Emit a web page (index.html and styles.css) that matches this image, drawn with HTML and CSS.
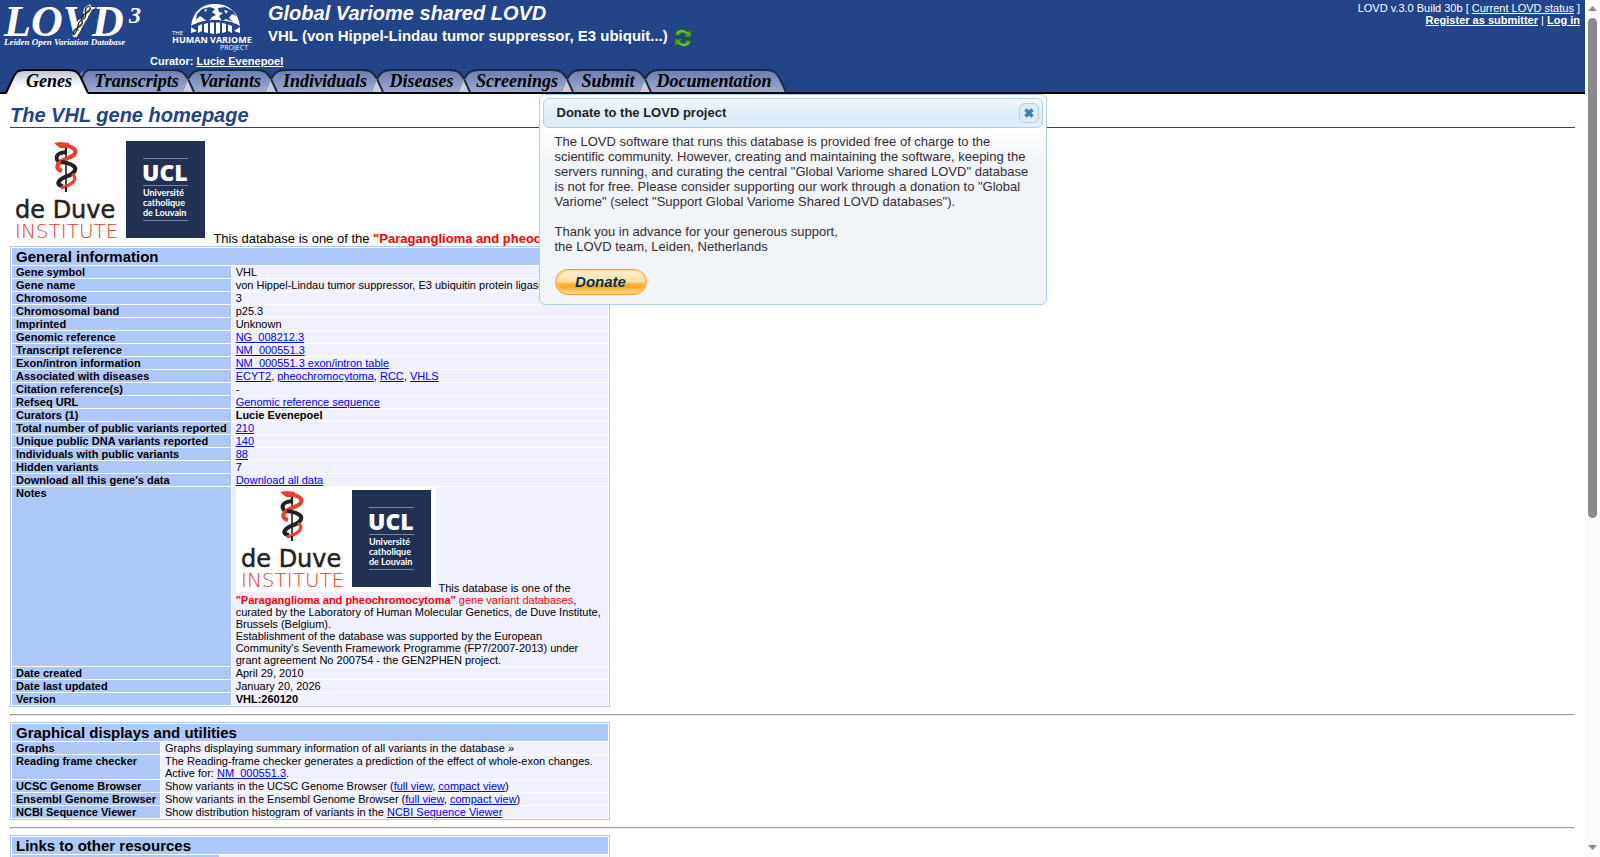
FILE: index.html
```html
<!DOCTYPE html>
<html lang="en">
<head>
<meta charset="utf-8">
<title>The VHL gene homepage - Global Variome shared LOVD</title>
<link rel="stylesheet" href="styles.css">
</head>
<body>
<svg class="defs" aria-hidden="true">
  <defs>
    <symbol id="institutes" viewBox="0 0 200 105">
      <rect width="200" height="105" fill="#fff"/>
      <g fill="none">
        <path d="M56 5V50" stroke="#222" stroke-width="1.600"/>
        <path d="M56 14C46 15 44 20 50 25" stroke="#222" stroke-width="4"/>
        <path d="M53 7C68 9 69 16 58 20C45 25 45 31 52 33" stroke="#e8402f" stroke-width="4.200"/>
        <path d="M51 24C67 26 69 32 60 37C46 42 46 47 53 48" stroke="#222" stroke-width="4.200"/>
        <path d="M62 36C68 40 65 46 51 50" stroke="#e8402f" stroke-width="3.200"/>
        <path d="M56 5V17M56 49V54" stroke="#222" stroke-width="2.200"/>
      </g>
      <path d="M44 5L50 4L59 5L58 10L50 10Z" fill="#e8402f"/>
      <text x="5" y="80" class="duve">de Duve</text>
      <text x="5" y="100" class="inst">INSTITUTE</text>
      <rect x="116" y="3" width="79" height="97" fill="#223153"/>
      <path d="M133 20.500H178M133 47.500H178M133 82.500H178" stroke="#7783a0" stroke-width="1"/>
      <text x="132" y="43" class="ucl">UCL</text>
      <text x="133" y="58" class="ucl-sub">Université</text>
      <text x="133" y="68" class="ucl-sub">catholique</text>
      <text x="133" y="78" class="ucl-sub">de Louvain</text>
    </symbol>
  </defs>
</svg>

<div class="page">
  <header class="masthead">
    <div class="top">
      <a class="logo" href="#" aria-label="LOVD">
        <svg width="150" height="50" viewBox="0 0 150 50">
          <text x="4" y="36" class="lovd">LOVD</text>
          <text x="129" y="23" class="three">3</text>
          <path d="M91 6C78 12 93 16 81 21C74 25 85 27 73 36" stroke="#fff" stroke-width="4" fill="none"/>
          <path d="M90 6C80 9 91 15 82 20C74 24 82 28 73 35M90 7C93 13 78 14 82 21C85 27 72 27 73 35" fill="none" stroke="#222" stroke-width="1.300"/>
          <path d="M84 11L90 11M82 17L86 17M78 25L82 25M75 30L79 30" stroke="#555" stroke-width="1"/>
          <text x="4" y="45" class="tagline">Leiden Open Variation Database</text>
        </svg>
      </a>
      <a class="hvp" href="#" aria-label="The Human Variome Project">
        <svg width="118" height="52" viewBox="0 0 118 52">
          <path d="M41 26C43 11 52 4 65 4S88 11 90 26C84 22 74 20 65 20S47 22 41 26Z" fill="#fff"/>
          <path d="M47 14L52 9L60 7L65 9L62 12L66 15L62 17L58 22L53 18L50 16L46 20ZM68 8L75 7L83 11L86 16L82 14L79 18L83 22L76 19L72 21L69 16L73 13L69 12Z" fill="#224488"/>
          <path d="M54 10L57 9L56 12ZM74 10L78 11L76 14Z" fill="#fff"/>
          <path d="M41 27L47 31L41 33ZM90 27L84 31L90 33Z" fill="#fff"/>
          <path d="M48 26L52 24V31L48 33ZM54 24L58 23V33L54 32ZM60 22.500H64V34L60 33ZM66 22.500H70V33L66 34ZM72 23L76 24V32L72 33ZM78 24.500L82 26V33L78 31Z" fill="#fff"/>
          <text x="22" y="35" class="hvp-the">THE</text>
          <text x="22" y="43" class="hvp-name">HUMAN VARIOME</text>
          <text x="70" y="50" class="hvp-project">PROJECT</text>
        </svg>
      </a>
      <div class="titles">
        <h1>Global Variome shared LOVD</h1>
        <div class="gene">VHL (von Hippel-Lindau tumor suppressor, E3 ubiquit...)
          <button class="switch" type="button" aria-label="Switch gene">
            <svg width="18" height="18" viewBox="0 0 18 18">
              <g stroke="#1f6b12" stroke-width="1" fill="#4fa824">
                <path d="M1 6C2 0 10 -1 14 3L17 1V8H10L12 5.500C9 3 6 4 5 7Z"/>
                <path d="M17 12C16 18 8 19 4 15L1 17V10H8L6 12.500C9 15 12 14 13 11Z"/>
              </g>
              <path d="M3 4C6 1 10 1 13 4M15 14C12 17 8 17 5 14" fill="none" stroke="#8fdc5c"/>
            </svg>
          </button>
        </div>
      </div>
      <div class="status">
        <div>LOVD v.3.0 Build 30b [ <a href="#">Current LOVD status</a> ]</div>
        <div class="account"><a href="#"><b>Register as submitter</b></a> | <a href="#"><b>Log in</b></a></div>
      </div>
    </div>
    <div class="curator">Curator: <a href="#">Lucie Evenepoel</a></div>
    <nav class="tabs" aria-label="Main">
      <svg class="tab-shapes" width="800" height="25" viewBox="0 0 800 25" aria-hidden="true">
        <defs>
          <linearGradient id="tabfill" x1="0" y1="0" x2="0" y2="1"><stop offset="0" stop-color="#687db3"/><stop offset="1" stop-color="#9dabcd"/></linearGradient>
          <linearGradient id="activefill" x1="0" y1="0" x2="0" y2="1"><stop offset="0" stop-color="#b9c2de"/><stop offset=".7" stop-color="#fff"/></linearGradient>
          <g id="join">
            <path d="M-9 0H9L0 9Z" fill="#224488"/>
            <path d="M0 9L-7 23H7Z" fill="#c6cde0"/>
            <path d="M-15 1C-7 1 -4 3 0 10L6 23" fill="none" stroke="#20283f" stroke-width="2"/>
            <path d="M15 1C7 1 4 3 0 10" fill="none" stroke="#20283f" stroke-width="2"/>
            <path d="M0 10L-6 23" fill="none" stroke="#7f8598" stroke-width="1"/>
          </g>
        </defs>
        <path d="M75 23V11C79 4 83 1 89 1H765C774 1 777 4 780 10L786 23Z" fill="url(#tabfill)"/>
        <path d="M82 9C84 4 85 1 90 1H765C774 1 777 4 780 10L786 23" fill="none" stroke="#1b2a52" stroke-width="2"/>
        <use href="#join" x="188"/>
        <use href="#join" x="271"/>
        <use href="#join" x="377"/>
        <use href="#join" x="464"/>
        <use href="#join" x="567"/>
        <use href="#join" x="645"/>
        <path d="M6 25L13 9C16 3 18 1 24 1H69C75 1 78 3 81 9L88 25Z" fill="url(#activefill)"/>
        <path d="M6 24L13 9C16 3 18 1 24 1H69C75 1 78 3 81 9L88 24" fill="none" stroke="#000" stroke-width="2"/>
      </svg>
      <a class="tab w-genes" href="#">Genes</a>
      <a class="tab w-transcripts" href="#">Transcripts</a>
      <a class="tab w-variants" href="#">Variants</a>
      <a class="tab w-individuals" href="#">Individuals</a>
      <a class="tab w-diseases" href="#">Diseases</a>
      <a class="tab w-screenings" href="#">Screenings</a>
      <a class="tab w-submit" href="#">Submit</a>
      <a class="tab w-docs" href="#">Documentation</a>
    </nav>
  </header>

  <main class="content">
    <h2>The VHL gene homepage</h2>
    <p class="intro"><svg class="institutes" width="200" height="105" role="img" aria-label="de Duve Institute, UCL"><use href="#institutes"/></svg> This database is one of the <span class="red"><b>"Paraganglioma and pheochromocytoma"</b> gene variant databases</span></p>

    <table class="info">
      <thead><tr><th class="head" colspan="2">General information</th></tr></thead>
      <tbody>
        <tr><th>Gene symbol</th><td>VHL</td></tr>
        <tr><th>Gene name</th><td>von Hippel-Lindau tumor suppressor, E3 ubiquitin protein ligase</td></tr>
        <tr><th>Chromosome</th><td>3</td></tr>
        <tr><th>Chromosomal band</th><td>p25.3</td></tr>
        <tr><th>Imprinted</th><td>Unknown</td></tr>
        <tr><th>Genomic reference</th><td><a href="#">NG_008212.3</a></td></tr>
        <tr><th>Transcript reference</th><td><a href="#">NM_000551.3</a></td></tr>
        <tr><th>Exon/intron information</th><td><a href="#">NM_000551.3 exon/intron table</a></td></tr>
        <tr><th>Associated with diseases</th><td><a href="#">ECYT2</a>, <a href="#">pheochromocytoma</a>, <a href="#">RCC</a>, <a href="#">VHLS</a></td></tr>
        <tr><th>Citation reference(s)</th><td>-</td></tr>
        <tr><th>Refseq URL</th><td><a href="#">Genomic reference sequence</a></td></tr>
        <tr><th>Curators (1)</th><td><b>Lucie Evenepoel</b></td></tr>
        <tr><th>Total number of public variants reported</th><td><a href="#">210</a></td></tr>
        <tr><th>Unique public DNA variants reported</th><td><a href="#">140</a></td></tr>
        <tr><th>Individuals with public variants</th><td><a href="#">88</a></td></tr>
        <tr><th>Hidden variants</th><td>7</td></tr>
        <tr><th>Download all this gene's data</th><td><a href="#">Download all data</a></td></tr>
        <tr><th>Notes</th><td><svg class="institutes" width="200" height="105" role="img" aria-label="de Duve Institute, UCL"><use href="#institutes"/></svg> This database is one of the <span class="red"><b>"Paraganglioma and pheochromocytoma"</b> gene variant databases</span>, curated by the Laboratory of Human Molecular Genetics, de Duve Institute, Brussels (Belgium).<br>Establishment of the database was supported by the European Community's Seventh Framework Programme (FP7/2007-2013) under grant agreement No 200754 - the GEN2PHEN project.</td></tr>
        <tr><th>Date created</th><td>April 29, 2010</td></tr>
        <tr><th>Date last updated</th><td>January 20, 2026</td></tr>
        <tr><th>Version</th><td><b>VHL:260120</b></td></tr>
      </tbody>
    </table>
    <hr>
    <table class="info">
      <thead><tr><th class="head" colspan="2">Graphical displays and utilities</th></tr></thead>
      <tbody>
        <tr><th>Graphs</th><td>Graphs displaying summary information of all variants in the database »</td></tr>
        <tr><th>Reading frame checker</th><td>The Reading-frame checker generates a prediction of the effect of whole-exon changes.<br>Active for: <a href="#">NM_000551.3</a>.</td></tr>
        <tr><th>UCSC Genome Browser</th><td>Show variants in the UCSC Genome Browser (<a href="#">full view</a>, <a href="#">compact view</a>)</td></tr>
        <tr><th>Ensembl Genome Browser</th><td>Show variants in the Ensembl Genome Browser (<a href="#">full view</a>, <a href="#">compact view</a>)</td></tr>
        <tr><th>NCBI Sequence Viewer</th><td>Show distribution histogram of variants in the <a href="#">NCBI Sequence Viewer</a></td></tr>
      </tbody>
    </table>
    <hr>
    <table class="info links">
      <colgroup><col class="label-col"><col></colgroup>
      <thead><tr><th class="head" colspan="2">Links to other resources</th></tr></thead>
      <tbody><tr><th></th><td></td></tr></tbody>
    </table>
  </main>

  <div class="dialog" role="dialog" aria-labelledby="dialog-title">
    <div class="dialog-bar">
      <span id="dialog-title">Donate to the LOVD project</span>
      <button class="close" type="button" aria-label="Close">
        <svg width="10" height="10" viewBox="0 0 10 10"><path d="M1.500 1.500L8.500 8.500M8.500 1.500L1.500 8.500" stroke="#3d80b3" stroke-width="3.600"/></svg>
      </button>
    </div>
    <div class="dialog-body">
      <p>The LOVD software that runs this database is provided free of charge to the scientific community. However, creating and maintaining the software, keeping the servers running, and curating the central "Global Variome shared LOVD" database is not for free. Please consider supporting our work through a donation to "Global Variome" (select "Support Global Variome Shared LOVD databases").</p>
      <p>Thank you in advance for your generous support,<br>the LOVD team, Leiden, Netherlands</p>
      <button class="donate" type="button">Donate</button>
    </div>
  </div>
</div>

<div class="scrollbar" aria-hidden="true">
  <svg width="9" height="5" viewBox="0 0 9 5"><path d="M0 5L4.500 0L9 5Z" fill="#8b8b8b"/></svg>
  <div class="track"><div class="thumb"></div></div>
  <svg width="9" height="5" viewBox="0 0 9 5"><path d="M0 0L4.500 5L9 0Z" fill="#8b8b8b"/></svg>
</div>
</body>
</html>
```
FILE: styles.css
```css
* { box-sizing: border-box; }

body {
  margin: 0;
  height: 100vh;
  overflow: hidden;
  display: grid;
  grid-template-columns: 1fr 15px;
  background: #fff;
  color: #000;
  font: 13px/15px "Liberation Sans", Arial, sans-serif;
}

.defs { position: absolute; width: 0; height: 0; }

.page {
  position: relative;
  height: 100vh;
  overflow: hidden;
}

/* Header */
.masthead {
  background: #224488;
  color: #fff;
  border-bottom: 2px solid #000;
}
.masthead a { color: #fff; }
.top {
  display: flex;
  height: 55px;
}
.logo, .hvp { display: block; }
.logo { width: 150px; }
.hvp { width: 118px; }
.logo svg, .hvp svg { display: block; overflow: visible; }
.titles { flex: 1; padding-top: 1px; }
h1 {
  margin: 0;
  font: italic bold 20px/24px "Liberation Sans", Arial, sans-serif;
}
.gene {
  display: flex;
  align-items: center;
  gap: 6px;
  font: bold 15px/22px "Liberation Sans", Arial, sans-serif;
}
.switch {
  padding: 4px 0 0;
  border: 0;
  background: none;
  height: 22px;
}
.switch svg { display: block; }
.status {
  padding: 2px 5px 0 0;
  font-size: 11px;
  line-height: 12px;
  text-align: right;
}
.curator {
  padding: 0 0 2px 150px;
  font-size: 11px;
  font-weight: bold;
  line-height: 12px;
}

.lovd, .three, .tagline {
  font-family: "Liberation Serif", "Times New Roman", serif;
  font-style: italic;
  font-weight: bold;
  fill: #fff;
}
.lovd { font-size: 44px; }
.three { font-size: 24px; }
.tagline { font-size: 9px; }
.hvp-the, .hvp-name, .hvp-project { font-family: "Open Sans", sans-serif; fill: #fff; }
.hvp-the { font-size: 6px; }
.hvp-name { font-size: 9px; font-weight: bold; }
.hvp-project { font-size: 7px; }

/* Tabs */
.tabs {
  position: relative;
  display: flex;
  height: 23px;
  padding-left: 8px;
}
.tab-shapes { position: absolute; left: 0; top: 0; }
.tabs .tab {
  position: relative;
  color: #000;
  text-align: center;
  text-decoration: none;
  font: italic bold 18px/24px "Liberation Serif", "Times New Roman", serif;
}
.w-genes { width: 82px; }
.w-transcripts { width: 93px; }
.w-variants { width: 94px; }
.w-individuals { width: 96px; }
.w-diseases { width: 97px; }
.w-screenings { width: 94px; }
.w-submit { width: 88px; }
.w-docs { width: 124px; }

/* Content */
.content { padding: 10px 10px 0; }
h2 {
  margin: 0 0 10px;
  border-bottom: 1px solid #224488;
  color: #224488;
  font: italic bold 20px/23px "Liberation Sans", Arial, sans-serif;
}
.intro { margin: 0; }
.institutes { vertical-align: baseline; }
.red { color: #f00; }

.duve { font: 24px "DejaVu Sans", sans-serif; fill: #222; stroke: #222; stroke-width: 0.5px; }
.inst { font: 200 20px "DejaVu Sans", sans-serif; fill: #e8402f; }
.ucl { font: 800 23px "Open Sans", sans-serif; fill: #fff; }
.ucl-sub { font: bold 9px Lato, sans-serif; fill: #fff; }

.info {
  width: 600px;
  border: 1px solid #afc8fa;
  border-spacing: 1px;
  font-size: 11px;
  line-height: 12px;
}
.info th, .info td {
  padding: 0 4px;
  text-align: left;
  vertical-align: top;
}
.info th {
  width: 1%;
  background: #afc8fa;
  white-space: nowrap;
}
.info td { background: #f0f0ff; }
.info .head { width: auto; font-size: 15px; line-height: 17px; }
.info a { color: #00f; }
.links { table-layout: fixed; }
.links .label-col { width: 207px; }
.links tbody th { width: auto; height: 12px; }

hr {
  margin: 7px 0 6px;
  border: 1px solid;
  border-color: #9a9a9a #eee #eee #9a9a9a;
}

/* Dialog */
.dialog {
  position: absolute;
  top: 94px;
  left: 50%;
  transform: translateX(-50%);
  width: 508px;
  padding: 3px;
  border: 1px solid #aed0ea;
  border-radius: 6px;
  background: #f2f5f7 linear-gradient(#fff, #fff 35px, #f2f5f7 65px);
  color: #362b36;
}
.dialog-bar {
  display: flex;
  align-items: center;
  justify-content: space-between;
  height: 30px;
  padding: 0 3px 0 13px;
  border: 1px solid #aed0ea;
  border-radius: 6px;
  background: linear-gradient(#f1f7fc, #deedf7 60%);
  color: #222;
  font-weight: bold;
}
#dialog-title { padding-bottom: 1px; }
.close {
  display: grid;
  place-items: center;
  width: 20px;
  height: 20px;
  padding: 0;
  border: 1px solid #aed0ea;
  border-radius: 6px;
  background: #deedf7;
}
.dialog-body { padding: 6px 12px; }
.dialog-body p { margin: 0 0 15px; }
.donate {
  display: block;
  width: 92px;
  height: 26px;
  padding: 0;
  border: 1px solid #ff9933;
  border-radius: 13px;
  background: linear-gradient(#fff1d8, #ffdf9f 50%, #ffb433 58%, #ffa822 72%, #ffe6a0);
  box-shadow: inset 0 0 2px 1px #ffcf80;
  color: #003366;
  font: italic bold 15px/22px "Liberation Sans", Arial, sans-serif;
}

/* Scrollbar */
.scrollbar {
  display: flex;
  flex-direction: column;
  align-items: center;
  gap: 7px;
  height: 100vh;
  padding: 6px 0 7px;
  background: #fcfcfc;
}
.track { flex: 1; width: 9px; }
.thumb {
  height: 61%;
  border-radius: 5px;
  background: #8b8b8b;
}
```
